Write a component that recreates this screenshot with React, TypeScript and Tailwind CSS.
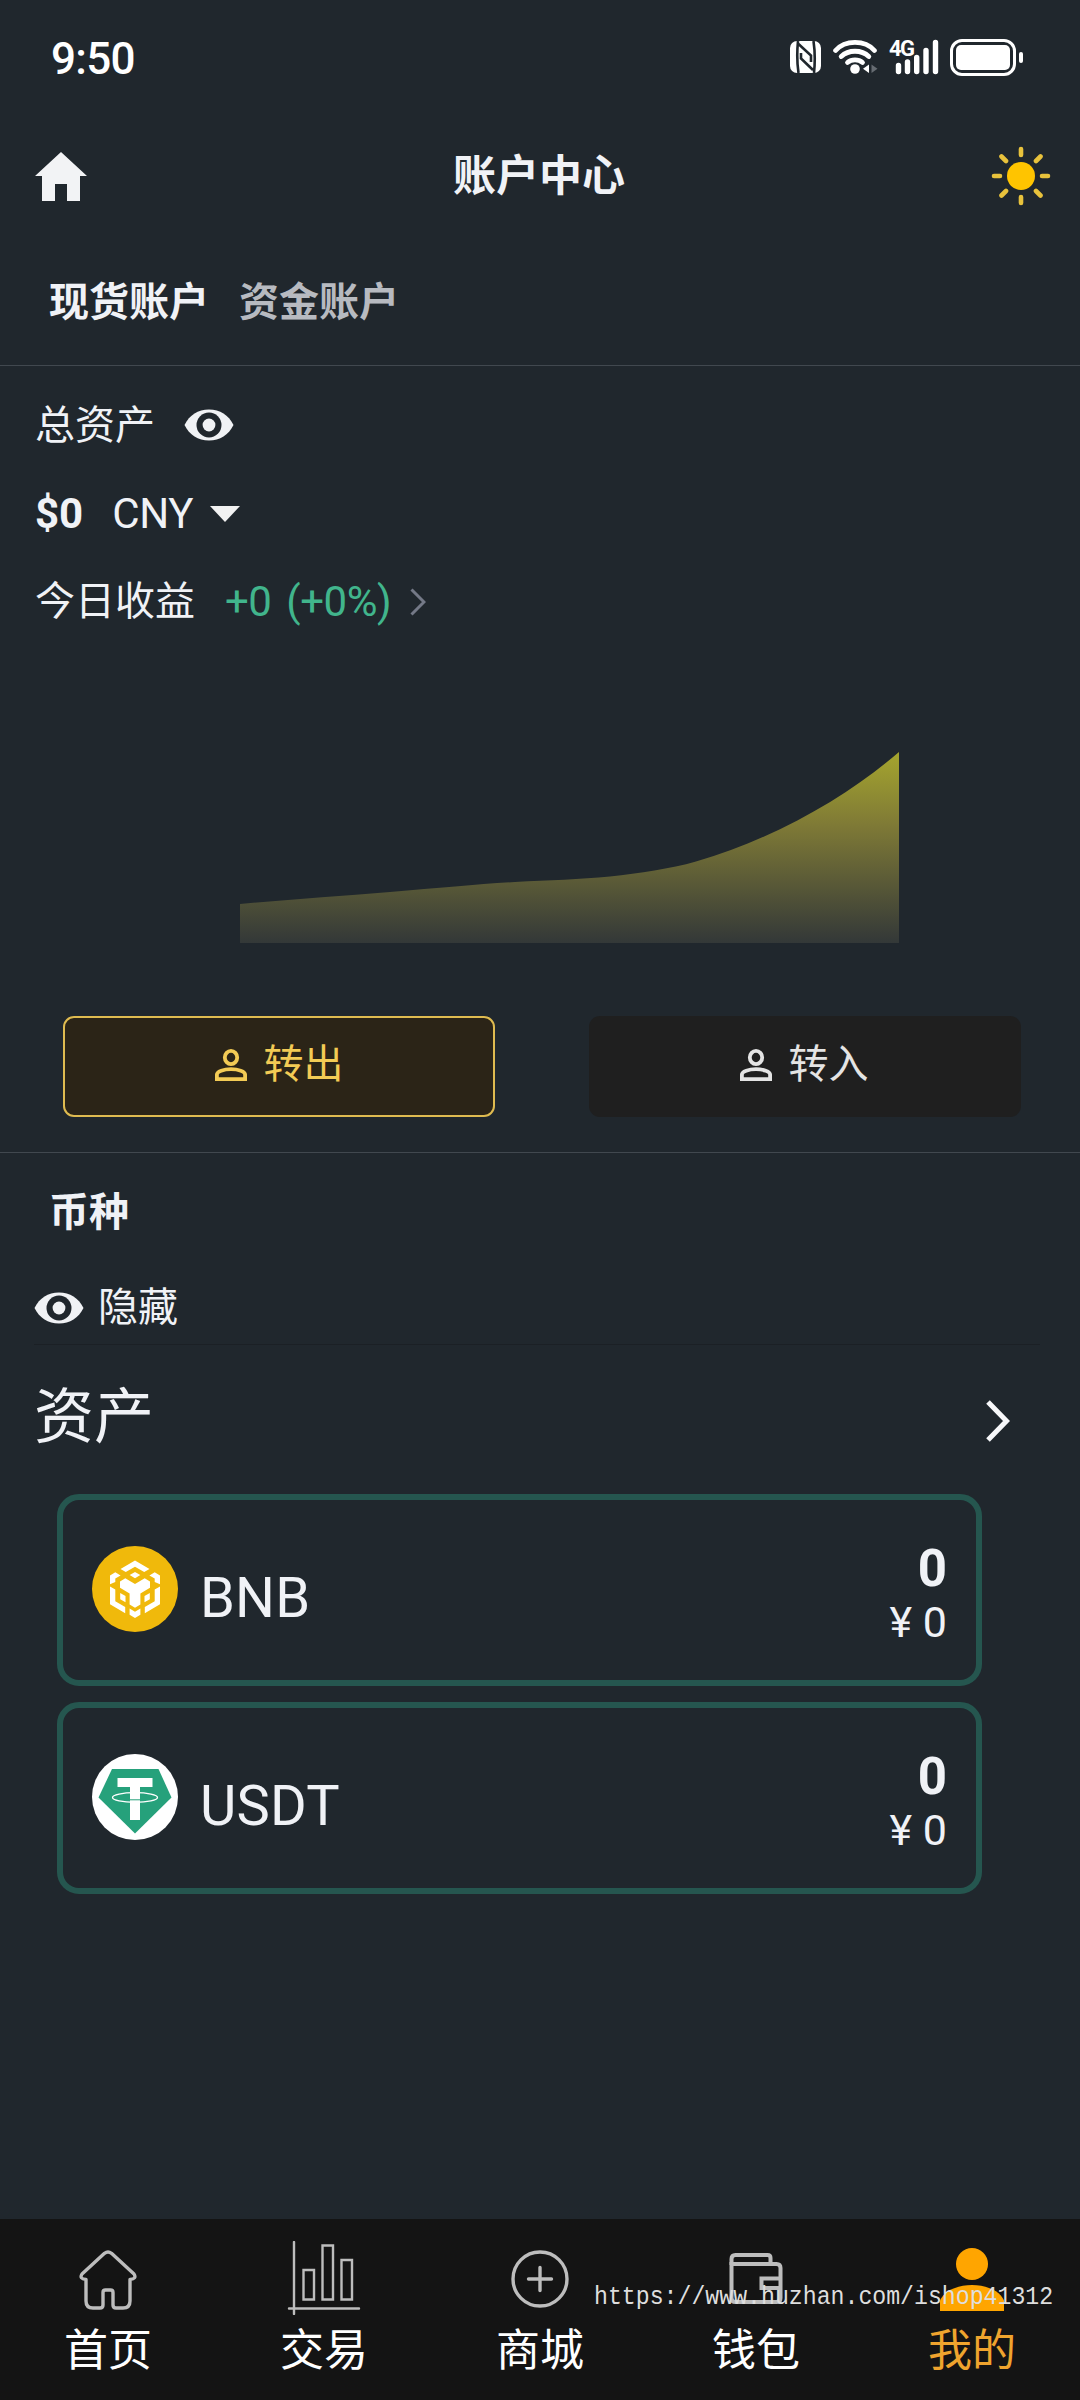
import React from 'react';
import clsx from 'clsx';

const assets = [
  { symbol: 'BNB', amount: '0', value: '¥ 0', Logo: BnbLogo },
  { symbol: 'USDT', amount: '0', value: '¥ 0', Logo: UsdtLogo },
];

const navItems = [
  { label: '首页', Icon: NavHomeIcon },
  { label: '交易', Icon: NavTradeIcon },
  { label: '商城', Icon: NavMallIcon },
  { label: '钱包', Icon: NavWalletIcon },
  { label: '我的', Icon: NavMineIcon, active: true },
];

function BnbLogo() {
  return (
    <svg className="size-[86px]" viewBox="0 0 86 86">
      <circle cx="43" cy="43" r="43" fill="#f0b90b" />
      <g fill="#fff">
        <path d="M43 14.5 57.5 23l-5.3 3.1L43 20.7l-9.2 5.4-5.3-3.1z" />
        <path d="M43 26l5.3 3.1L43 32.2l-5.3-3.1z" />
        <path d="M18 29.4l5.3-3.1 5.3 3.1-5.3 3.2v3.300L18 38.3z" />
        <path d="M68 29.4l-5.3-3.1-5.3 3.1 5.3 3.2v3.300l5.3 2.400z" />
        <path d="M28 35.4l5.3-3.1L43 38l9.7-5.7 5.3 3.1v6.3l-9.6 5.7v11.2L43 61.8l-5.4-3.2V47.4L28 41.7z" />
        <path d="M28.2 47l5.3 3.1v6.2l-5.3-3.1z" />
        <path d="M57.8 47l-5.3 3.1v6.2l5.3-3.1z" />
        <path d="M18 40.5l5.3 3.1v11.6l9.9 5.8v6.2L18 58.3z" />
        <path d="M68 40.5l-5.3 3.1v11.6l-9.9 5.8v6.2L68 58.3z" />
        <path d="M37.6 62.5l5.4 3.2 5.4-3.2v6.2L43 72l-5.4-3.3z" />
      </g>
    </svg>
  );
}

function UsdtLogo() {
  return (
    <svg className="size-[86px]" viewBox="0 0 86 86">
      <circle cx="43" cy="43" r="43" fill="#fff" />
      <path d="M20 15h46.500l13 28.500L43 79.500 6.500 43.500z" fill="#26a17b" />
      <path d="M25.500 24h35v9H48v33H38V33H25.500z" fill="#fff" />
      <ellipse
        cx="43"
        cy="43.500"
        rx="22.500"
        ry="4.800"
        fill="none"
        stroke="#fff"
        strokeWidth="1.300"
      />
      <path d="M38 45.800h10" stroke="#26a17b" strokeWidth="1" />
    </svg>
  );
}

function EyeIcon() {
  return (
    <svg className="h-[32px] w-[50px]" viewBox="0 0 50 32">
      <path
        d="M25 .5C36 .5 44.500 6 49.500 16 44.500 26 36 31.500 25 31.500S5.500 26 .5 16C5.500 6 14 .5 25 .5z"
        fill="#f0f2f5"
      />
      <circle cx="25" cy="16" r="12.500" fill="#20272d" />
      <circle cx="25" cy="16" r="6.400" fill="#f0f2f5" />
    </svg>
  );
}

function PersonIcon() {
  return (
    <svg
      className="size-[32px]"
      viewBox="0 0 32 32"
      fill="none"
      stroke="currentColor"
      strokeWidth="3.800"
    >
      <ellipse cx="16" cy="8.500" rx="6.200" ry="6.600" />
      <path d="M1.900 30.100v-4.500c0-3.200 6.900-5.400 14.100-5.400s14.100 2.200 14.100 5.400v4.500z" />
    </svg>
  );
}

function HomeIcon() {
  return (
    <svg className="h-[49px] w-[52px]" viewBox="0 0 52 49" fill="#f2f3f5">
      <path d="M26 0 52 24h-7v25H32V32H20v17H7V24H0z" />
    </svg>
  );
}

function SunIcon() {
  return (
    <svg className="size-[60px]" viewBox="0 0 60 60">
      <circle cx="30" cy="30" r="14" fill="#ffc400" />
      <g stroke="#e8c23c" strokeWidth="4.600" strokeLinecap="round">
        <path d="M30 3v6M30 51v6M3 30h6M51 30h6" />
        <path d="M10.500 10.500l4.500 4.500M45 45l4.500 4.500M10.500 49.500l4.500-4.500M45 15l4.500-4.500" />
      </g>
    </svg>
  );
}

function NavHomeIcon() {
  return (
    <svg
      className="size-[60px]"
      viewBox="0 0 60 60"
      fill="none"
      stroke="#bdbdbd"
      strokeWidth="3.400"
      strokeLinejoin="round"
    >
      <path d="M26.500 3.300q3.500-2.600 7 0L56 24q3 5-4 5.500V51q0 7-7 7H38q-3 0-3-3V42.500q0-2.500-2.500-2.500h-5q-2.500 0-2.500 2.500V55q0 3-3 3h-7q-7 0-7-7V29.500Q1 29 4 24z" />
    </svg>
  );
}

function NavTradeIcon() {
  return (
    <svg
      className="mb-[4px] size-[74px]"
      viewBox="0 0 74 74"
      fill="none"
      stroke="#bdbdbd"
      strokeWidth="2.400"
      strokeLinecap="round"
    >
      <path d="M7 1v72M2 67.500h70" />
      <path d="M16.500 29h10.500v29.500h-10.500zM35.500 4.500h10.500v54H35.500zM54.500 19H65v39.500H54.500z" />
    </svg>
  );
}

function NavMallIcon() {
  return (
    <svg
      className="size-[60px]"
      viewBox="0 0 60 60"
      fill="none"
      stroke="#bdbdbd"
      strokeWidth="3.400"
      strokeLinecap="round"
    >
      <circle cx="30" cy="29" r="27" />
      <path d="M30 17.500v23M18.500 29h23" />
    </svg>
  );
}

function NavWalletIcon() {
  return (
    <svg
      className="mb-[3px] h-[52px] w-[54px]"
      viewBox="0 0 54 52"
      fill="none"
      stroke="#bdbdbd"
      strokeWidth="4"
    >
      <path d="M2.500 12V6q0-4 4-4h32q3 0 3 3v6" />
      <path d="M2.500 11h45q4 0 4 4v30q0 4-4 4H6.500q-4 0-4-4z" />
      <path d="M51 25.500H32.500v9.500H51" />
    </svg>
  );
}

function NavMineIcon() {
  return (
    <svg className="h-[64px] w-[64px]" viewBox="0 0 64 64" fill="#ffa500">
      <circle cx="32" cy="16" r="16" />
      <path d="M0 63V52.500C4 43 17 37 32 37s28 6 32 15.500V63z" />
    </svg>
  );
}

const StatusBar = () => (
  <div className="flex h-[114px] shrink-0 items-center justify-between pl-[51px] pr-[57px]">
    <span className="pt-[4px] font-['Roboto'] text-[44px] font-medium leading-[50px] tracking-[-0.7px] text-white">
      9:50
    </span>
    <div className="flex items-center">
      <svg className="h-[32px] w-[32px]" viewBox="0 0 32 32">
        <rect width="31" height="32" rx="7" fill="#fff" />
        <path
          d="M8.500 32C7 22 7 10 8 0M8.500 3 21 14.500V21M23.500 0c1.500 10 1.500 22 .5 32M23 29 11 17.500V12"
          fill="none"
          stroke="#20272d"
          strokeWidth="2.600"
        />
      </svg>
      <svg className="ml-[11px] h-[34px] w-[46px]" viewBox="0 0 46 34">
        <g fill="none" stroke="#fff" strokeWidth="4.800" strokeLinecap="round">
          <path d="M2.600 10.500C12-.3 32-.3 41.400 10.500" />
          <path d="M8.200 16.500C15.500 9.500 28.500 9.500 35.800 16.500" />
          <path d="M14.500 22.500C18.500 19 25.500 19 29.500 22.500" />
        </g>
        <circle cx="22" cy="29" r="4.800" fill="#fff" />
        <path d="M36 24.500v8.500l-6-4.200z" fill="#fff" />
        <path d="M38.500 24.500v8.500l6-4.200z" fill="#666c72" />
      </svg>
      <div className="relative ml-[10px] h-[36px] w-[52px]">
        <svg className="h-[36px] w-[52px]" viewBox="0 0 52 36">
          <path
            d="M9.500 26.500v6M18.500 23v9.500M27.700 18.500v14M37 11.500v21M46.500 3.500v29"
            stroke="#fff"
            strokeWidth="5.400"
            strokeLinecap="round"
          />
        </svg>
        <span className="absolute left-0 top-[-1px] font-['Roboto'] text-[22px] font-bold leading-[22px] tracking-[-1.5px] text-white">
          4G
        </span>
      </div>
      <div className="ml-[9px] flex h-[37px] w-[66px] rounded-[12px] border-[3px] border-white p-[3px]">
        <div className="flex-1 rounded-[5px] bg-white" />
      </div>
      <div className="ml-[3px] h-[11px] w-[4px] rounded-[2px] bg-white" />
    </div>
  </div>
);

const Header = () => (
  <div className="flex h-[124px] shrink-0 items-center justify-between pl-[35px] pr-[29px]">
    <div className="w-[52px]">
      <HomeIcon />
    </div>
    <h1 className="text-[43px] font-bold leading-[60px]">账户中心</h1>
    <SunIcon />
  </div>
);

const AssetCard = ({ symbol, amount, value, Logo }: (typeof assets)[number]) => (
  <div className="flex h-[192px] items-center rounded-[22px] border-[6px] border-[#25564f] pl-[29px] pr-[29px]">
    <div className="pb-[2px]">
      <Logo />
    </div>
    <span className="ml-[22px] pt-[15px] text-[56px] leading-[64px] tracking-[0.2px]">
      {symbol}
    </span>
    <div className="ml-auto pt-[9px] text-right">
      <p className="text-[51px] font-bold leading-[54px]">{amount}</p>
      <p className="text-[43px] leading-[52px]">{value}</p>
    </div>
  </div>
);

const App = () => {
  return (
    <div className="relative flex h-[2400px] w-[1080px] flex-col bg-[#20272d] font-['Roboto','Noto_Sans_CJK_SC',sans-serif] text-[#f0f2f6]">
      <StatusBar />
      <Header />

      <div className="flex h-[128px] shrink-0 items-center gap-[30px] border-b border-[#41484f] pl-[49px] pt-[3px] text-[40px] font-bold leading-[60px]">
        <span>现货账户</span>
        <span className="text-[#b7bac0]">资金账户</span>
      </div>

      <section className="flex h-[787px] shrink-0 flex-col border-b border-[#41484f] pt-[14px]">
        <div className="flex h-[88px] items-center pl-[35px]">
          <span className="pt-[3px] text-[40px] leading-[60px]">总资产</span>
          <div className="ml-[29px] pt-[1px]">
            <EyeIcon />
          </div>
        </div>
        <div className="flex h-[88px] items-center pl-[35px] pt-[4px] text-[42px] leading-[60px]">
          <span className="font-bold">$0</span>
          <span className="ml-[29px] tracking-[-0.4px]">CNY</span>
          <svg className="ml-[17px] h-[16px] w-[30px]" viewBox="0 0 30 16">
            <path d="M0 0h30L15 16z" fill="#f2f2f2" />
          </svg>
        </div>
        <div className="flex h-[88px] items-center pl-[35px] pt-[4px] leading-[60px]">
          <span className="text-[40px]">今日收益</span>
          <span className="ml-[30px] text-[42px] tracking-[-0.500px] text-[#41b58c]">
            +0<span className="ml-[5px]"> (+0%)</span>
          </span>
          <svg className="ml-[19px] h-[28px] w-[16px]" viewBox="0 0 16 28">
            <path
              d="M1.500 1.500 14 14 1.500 26.500"
              fill="none"
              stroke="#747987"
              strokeWidth="3"
            />
          </svg>
        </div>

        <svg
          className="ml-[240px] mt-[108px] h-[191px] w-[659px] shrink-0"
          viewBox="0 0 659 191"
        >
          <defs>
            <linearGradient id="profit" x1="0" y1="0" x2="0" y2="1">
              <stop offset="0" stopColor="#a5a52e" />
              <stop offset="0.380" stopColor="#7f7a36" />
              <stop offset="1" stopColor="#333838" />
            </linearGradient>
          </defs>
          <path
            d="M0 152C50 147.500 100 144 150 140S240 132 275 130 340 127.500 370 124.500C400 121 430 117 456 109.500C540 85 610 42 659 0V191H0z"
            fill="url(#profit)"
          />
        </svg>

        <div className="mt-[73px] flex gap-[94px] pl-[63px] text-[40px] leading-[60px]">
          <button className="flex h-[101px] w-[432px] items-center justify-center gap-[17px] rounded-[11px] border-2 border-[#dfbb50] bg-[#2b2417] pb-[3px] text-[#f3cb55]">
            <PersonIcon />
            <span>转出</span>
          </button>
          <button className="flex h-[101px] w-[432px] items-center justify-center gap-[17px] rounded-[11px] bg-[#1f1f1f] pb-[3px] pr-[2px] text-[#e4e4e4]">
            <PersonIcon />
            <span>转入</span>
          </button>
        </div>
      </section>

      <h2 className="mt-[14px] flex h-[88px] shrink-0 items-center pl-[49px] pt-[4px] text-[40px] font-bold leading-[60px]">
        币种
      </h2>
      <div className="ml-[34px] mr-[40px] mt-[15px] flex h-[75px] shrink-0 items-center gap-[14px] border-b border-[#1b2025] pt-[2px] text-[40px] leading-[60px]">
        <EyeIcon />
        <span>隐藏</span>
      </div>
      <div className="flex h-[149px] shrink-0 items-center justify-between pl-[34px] pr-[69px]">
        <h2 className="pb-[4px] text-[60px] leading-[80px]">资产</h2>
        <svg className="mt-[2px] h-[42px] w-[26px]" viewBox="0 0 26 42">
          <path
            d="M3 2 21.500 21 3 40"
            fill="none"
            stroke="#f7f8fa"
            strokeWidth="5"
          />
        </svg>
      </div>
      <div className="flex flex-col gap-[16px] pl-[57px] pr-[98px]">
        {assets.map(asset => (
          <AssetCard key={asset.symbol} {...asset} />
        ))}
      </div>

      <nav className="relative mt-auto grid h-[181px] shrink-0 grid-cols-5 bg-[#141414]">
        {navItems.map(({ label, Icon, active }) => (
          <div
            key={label}
            className={clsx(
              'flex flex-col items-center pt-[22px]',
              active ? 'text-[#efa42e]' : 'text-white',
            )}
          >
            <div className="flex h-[78px] items-center">
              <Icon />
            </div>
            <span className="pt-[2px] text-[44px] leading-[60px]">{label}</span>
          </div>
        ))}
        <span className="absolute left-[594px] top-[62px] origin-center scale-y-[1.15] whitespace-nowrap font-['Liberation_Mono'] text-[23.2px] leading-[32px] text-[#dedede]">
          https://www.huzhan.com/ishop41312
        </span>
      </nav>
    </div>
  );
};

export default App;
